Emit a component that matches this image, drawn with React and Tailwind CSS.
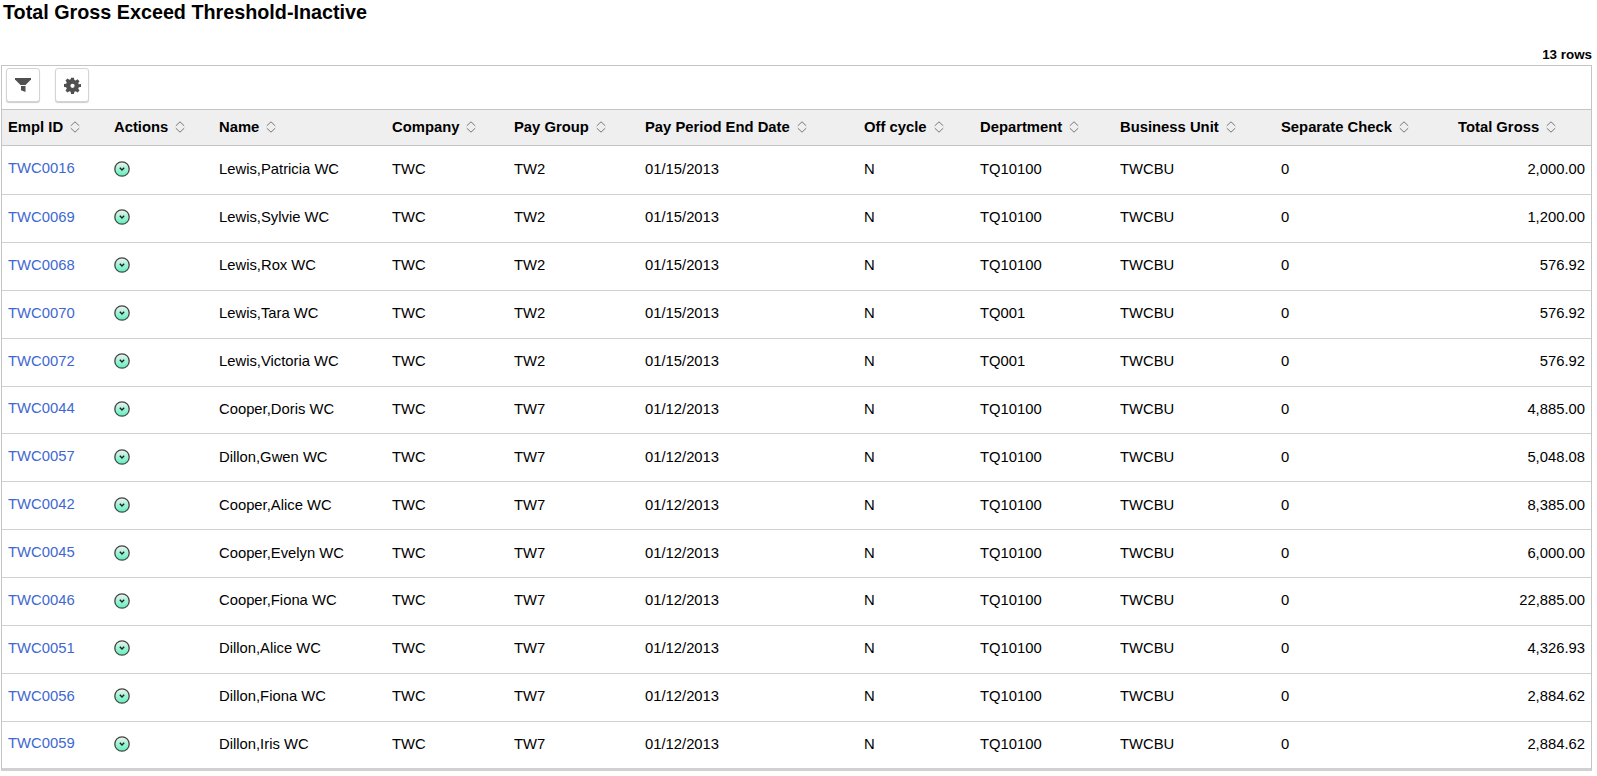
const columns = [
  { label: "Empl ID", width: "w-[106px]" },
  { label: "Actions", width: "w-[105px]" },
  { label: "Name", width: "w-[173px]" },
  { label: "Company", width: "w-[122px]" },
  { label: "Pay Group", width: "w-[131px]" },
  { label: "Pay Period End Date", width: "w-[219px]" },
  { label: "Off cycle", width: "w-[116px]" },
  { label: "Department", width: "w-[140px]" },
  { label: "Business Unit", width: "w-[161px]" },
  { label: "Separate Check", width: "w-[177px]" },
  { label: "Total Gross", width: "w-[139px]" },
];

const rows = [
  ["TWC0016", "Lewis,Patricia WC", "TW2", "01/15/2013", "TQ10100", "2,000.00"],
  ["TWC0069", "Lewis,Sylvie WC", "TW2", "01/15/2013", "TQ10100", "1,200.00"],
  ["TWC0068", "Lewis,Rox WC", "TW2", "01/15/2013", "TQ10100", "576.92"],
  ["TWC0070", "Lewis,Tara WC", "TW2", "01/15/2013", "TQ001", "576.92"],
  ["TWC0072", "Lewis,Victoria WC", "TW2", "01/15/2013", "TQ001", "576.92"],
  ["TWC0044", "Cooper,Doris WC", "TW7", "01/12/2013", "TQ10100", "4,885.00"],
  ["TWC0057", "Dillon,Gwen WC", "TW7", "01/12/2013", "TQ10100", "5,048.08"],
  ["TWC0042", "Cooper,Alice WC", "TW7", "01/12/2013", "TQ10100", "8,385.00"],
  ["TWC0045", "Cooper,Evelyn WC", "TW7", "01/12/2013", "TQ10100", "6,000.00"],
  ["TWC0046", "Cooper,Fiona WC", "TW7", "01/12/2013", "TQ10100", "22,885.00"],
  ["TWC0051", "Dillon,Alice WC", "TW7", "01/12/2013", "TQ10100", "4,326.93"],
  ["TWC0056", "Dillon,Fiona WC", "TW7", "01/12/2013", "TQ10100", "2,884.62"],
  ["TWC0059", "Dillon,Iris WC", "TW7", "01/12/2013", "TQ10100", "2,884.62"],
];

function SortIcon() {
  return (
    <svg width="10" height="12" viewBox="0 0 10 12" className="ml-[7px] inline-block align-[-1px]" fill="none" stroke="#777" strokeWidth="1">
      <path d="M.8 4.800 5 .8l4.200 4" />
      <path d="M.8 7.200 5 11.200l4.200-4" />
    </svg>
  );
}

function ActionIcon() {
  return (
    <svg width="16" height="16" viewBox="0 0 16 16" className="block">
      <defs>
        <linearGradient id="actionFill" x1="0" y1="0" x2="0" y2="1">
          <stop offset="0" stopColor="#f0f4f2" />
          <stop offset="0.45" stopColor="#a8f2d8" />
          <stop offset="1" stopColor="#58f2bc" />
        </linearGradient>
      </defs>
      <circle cx="8" cy="8" r="7.200" fill="url(#actionFill)" stroke="#444" strokeWidth="1.300" />
      <path d="M5.800 6.800 8 9 10.200 6.800" fill="none" stroke="#222" strokeWidth="1.400" />
    </svg>
  );
}

function ToolButton({ children }) {
  return (
    <button className="flex h-[34px] w-[34px] items-center justify-center rounded-[3px] border border-[#d4d4d4] bg-white shadow-[0_1px_1px_rgba(0,0,0,0.2)]">
      {children}
    </button>
  );
}

export default function App() {
  return (
    <div className="h-[776px] w-[1597px] overflow-hidden bg-white font-['Liberation_Sans',Arial,sans-serif] text-[14.8px] text-black">
      <h1 className="h-[46px] pl-[3px] pt-[1px] text-[19.75px] leading-[22px] font-bold">
        Total Gross Exceed Threshold-Inactive
      </h1>
      <div className="h-[19px] w-[1592px] pt-[1px] text-right text-[13.4px] leading-[16px] font-bold">13 rows</div>
      <div className="ml-[1px] w-[1591px] border border-b-[3px] border-[#c4c4c4] border-b-[#d0d0d0]">
        <div className="flex h-[43px] items-start gap-[15px] pl-[4px] pt-[2px]">
          <ToolButton>
            <svg width="16" height="14" viewBox="0 0 16 14" fill="#505050">
              <path d="M0 0h16v1.500L10.500 7h-5L0 1.500z" />
              <path d="M6 8h4.500v6L6 12.200z" />
            </svg>
          </ToolButton>
          <ToolButton>
            <svg width="17" height="17" viewBox="0 0 24 24" fill="#505050">
              <path fillRule="evenodd" d="M10 1h4l.6 3.100 1.900.8 2.600-1.800 2.800 2.800-1.800 2.600.8 1.900L24 10v4l-3.100.6-.8 1.900 1.800 2.600-2.800 2.800-2.600-1.800-1.900.8L14 24h-4l-.6-3.100-1.900-.8-2.600 1.800-2.800-2.800 1.800-2.600-.8-1.900L0 14v-4l3.100-.6.8-1.900L2.100 4.900l2.800-2.800 2.600 1.800 1.900-.8zM12 9.500a3 3 0 1 0 0 6 3 3 0 0 0 0-6z" />
            </svg>
          </ToolButton>
        </div>
        <table className="w-full table-fixed border-collapse">
          <thead>
            <tr className="h-[36px] border-y border-[#c4c4c4] bg-[#efefef]">
              {columns.map((col) => (
                <th key={col.label} className={`${col.width} pl-[6px] text-left font-bold whitespace-nowrap`}>
                  {col.label}
                  <SortIcon />
                </th>
              ))}
            </tr>
          </thead>
          <tbody>
            {rows.map((row, i) => (
              <tr
                key={row[0]}
                className={i === 0 ? "h-[49px] border-b border-[#d0d0d0]" : i < rows.length - 1 ? "h-[47.9px] border-b border-[#d0d0d0]" : "h-[47px]"}
              >
                <td className="pl-[6px] pb-[3px]">
                  <a href="#" className="text-[#3d68d2]">{row[0]}</a>
                </td>
                <td className="pl-[6px] pb-[2px]"><ActionIcon /></td>
                <td className="pl-[6px] pb-[2px]">{row[1]}</td>
                <td className="pl-[6px] pb-[2px]">TWC</td>
                <td className="pl-[6px] pb-[2px]">{row[2]}</td>
                <td className="pl-[6px] pb-[2px]">{row[3]}</td>
                <td className="pl-[6px] pb-[2px]">N</td>
                <td className="pl-[6px] pb-[2px]">{row[4]}</td>
                <td className="pl-[6px] pb-[2px]">TWCBU</td>
                <td className="pl-[6px] pb-[2px]">0</td>
                <td className="pr-[6px] pb-[2px] text-right">{row[5]}</td>
              </tr>
            ))}
          </tbody>
        </table>
      </div>
    </div>
  );
}
